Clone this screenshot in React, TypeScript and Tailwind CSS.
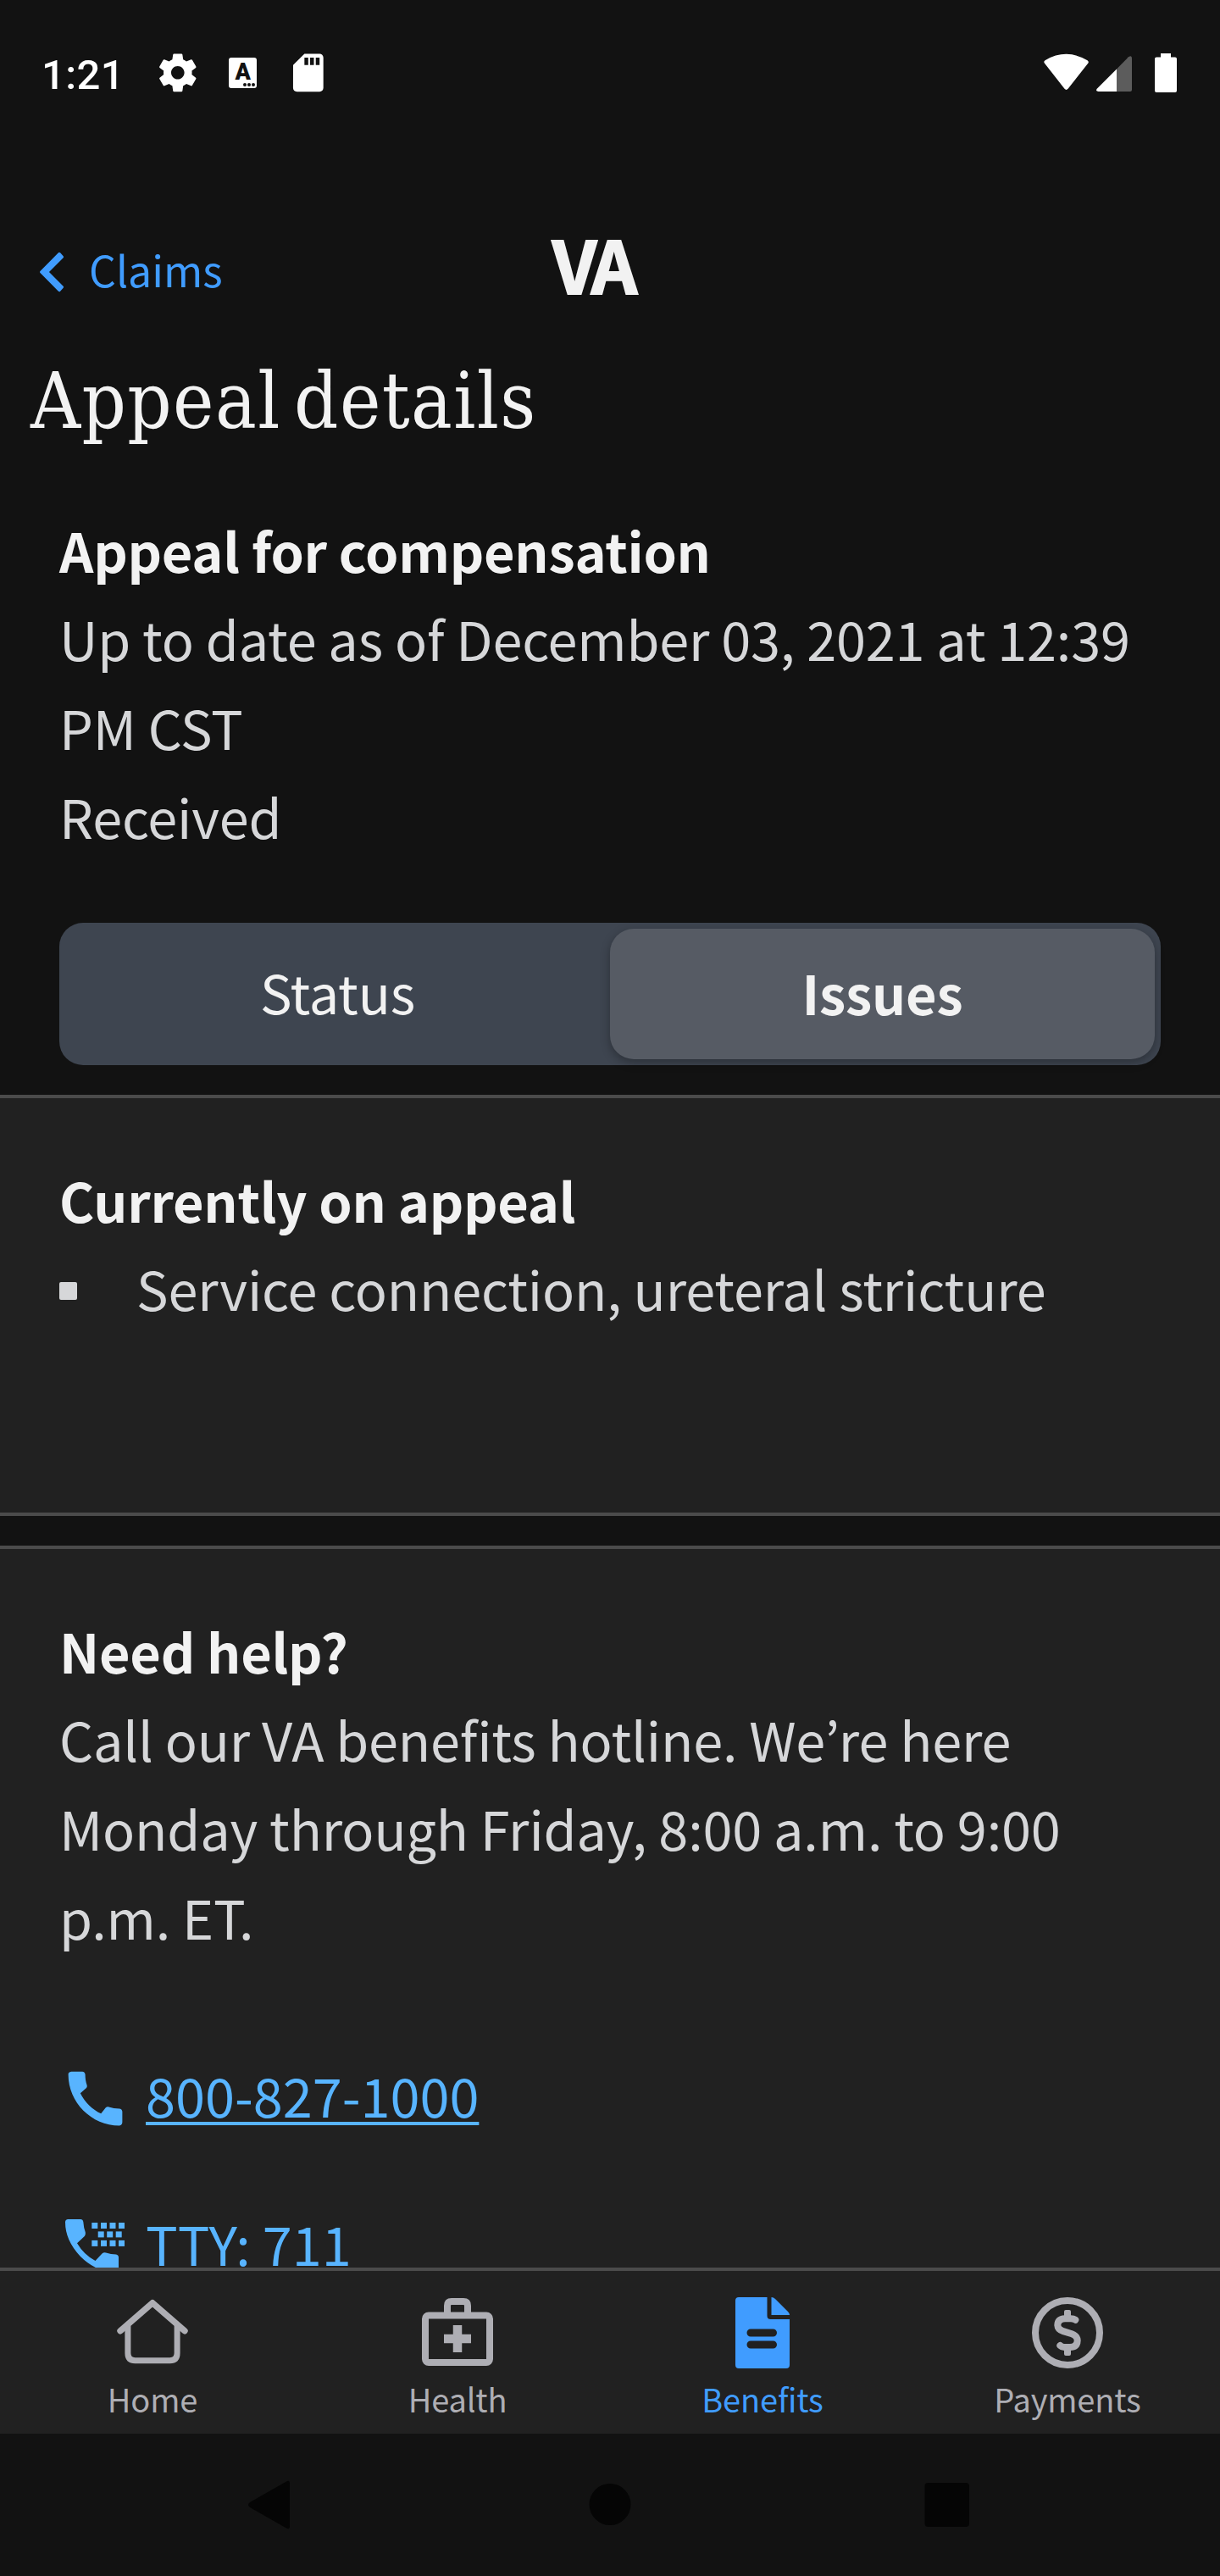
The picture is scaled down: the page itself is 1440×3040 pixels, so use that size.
import React from "react";

const sans = "font-['Noto_Sans_CJK_KR','Noto_Sans',sans-serif]";

const GEAR =
  "M19.43 12.98c.04-.32.07-.64.07-.98s-.03-.66-.07-.98l2.11-1.65c.19-.15.24-.42.12-.64l-2-3.46c-.12-.22-.39-.3-.61-.22l-2.49 1c-.52-.4-1.08-.73-1.69-.98l-.38-2.65C14.46 2.18 14.25 2 14 2h-4c-.25 0-.46.18-.49.42l-.38 2.65c-.61.25-1.17.59-1.69.98l-2.49-1c-.23-.09-.49 0-.61.22l-2 3.46c-.13.22-.07.49.12.64l2.11 1.65c-.04.32-.07.65-.07.98s.03.66.07.98l-2.11 1.65c-.19.15-.24.42-.12.64l2 3.46c.12.22.39.3.61.22l2.49-1c.52.4 1.08.73 1.69.98l.38 2.65c.03.24.24.42.49.42h4c.25 0 .46-.18.49-.42l.38-2.65c.61-.25 1.17-.59 1.69-.98l2.49 1c.23.09.49 0 .61-.22l2-3.46c.12-.22.07-.49-.12-.64l-2.11-1.65zM12 15.5c-1.93 0-3.5-1.57-3.5-3.5s1.57-3.5 3.5-3.5 3.5 1.57 3.5 3.5-1.57 3.5-3.5 3.5z";
const SD_CARD =
  "M18 2h-8L4.02 8 4 20c0 1.1.9 2 2 2h12c1.1 0 2-.9 2-2V4c0-1.1-.9-2-2-2zm-6 6h-2V4h2v4zm3 0h-2V4h2v4zm3 0h-2V4h2v4z";

function StatusBar() {
  return (
    <div className="flex h-[172px] items-center justify-between pl-[49px] pr-[51px] text-white">
      <div className="flex items-center">
        <span className="mt-[5px] w-[134px] font-['Roboto',sans-serif] text-[49px] font-medium leading-[56px] tracking-[0.4px]">1:21</span>
        <svg className="size-[53.6px] shrink-0" viewBox="0 0 24 24" fill="currentColor"><path d={GEAR} /></svg>
        <div className="relative ml-[33.5px] h-[36.5px] w-[33px] rounded-[3px] bg-white">
          <span className="block text-center font-['Roboto',sans-serif] text-[27px] font-black leading-[35px] text-[#121212]">A</span>
          <div className="absolute bottom-[2.4px] right-[2.5px] flex gap-[1.6px]">
            <i className="size-[3.4px] rounded-full bg-[#121212]" />
            <i className="size-[3.4px] rounded-full bg-[#121212]" />
            <i className="size-[3.4px] rounded-full bg-[#121212]" />
          </div>
        </div>
        <svg className="ml-[33.5px] size-[53.6px] shrink-0" viewBox="0 0 24 24" fill="currentColor"><path d={SD_CARD} /></svg>
      </div>
      <svg className="h-[50px] w-[158px]" viewBox="1231 61 158 50">
        <path d="M1233.2 75Q1231.2 72.8 1233.5 71.2Q1258.5 56.5 1283.5 71.2Q1285.8 72.8 1284 75L1260.6 104.8Q1258.5 107 1256.5 104.8Z" fill="#fff" />
        <path d="M1295 104.5L1318 81.5V108H1296.5Q1292.5 107.5 1295 104.5Z" fill="#fff" />
        <path d="M1318 81.5L1332 67.3Q1336 64.5 1336 69V106Q1336 108 1334 108H1318Z" fill="#5c5c5c" />
        <path d="M1370 63H1382V67.5H1387Q1389 67.5 1389 69.5V107Q1389 109 1387 109H1365Q1363 109 1363 107V69.5Q1363 67.5 1365 67.5H1370Z" fill="#fff" />
      </svg>
    </div>
  );
}

function PhoneIcon() {
  return (
    <svg className="size-[85px]" viewBox="0 0 24 24" fill="currentColor">
      <path d="M20.01 15.38c-1.23 0-2.42-.2-3.53-.56-.35-.12-.74-.03-1.01.24l-1.57 1.97c-2.83-1.35-5.48-3.9-6.89-6.83l1.95-1.66c.27-.28.35-.67.24-1.02-.37-1.11-.56-2.3-.56-3.53 0-.54-.45-.99-.99-.99H4.19C3.65 3 3 3.24 3 3.99 3 13.28 10.73 21 20.01 21c.71 0 .99-.63.99-1.18v-3.45c0-.54-.45-.99-.99-.99z" />
    </svg>
  );
}

function TtyIcon() {
  const keys = [
    [31.3, 4], [42, 4], [52.5, 4], [63, 4],
    [38.7, 14.4], [49.2, 14.4], [59.7, 14.4],
    [31.3, 24.9], [42, 24.9], [52.5, 24.9], [63, 24.9],
  ];
  return (
    <svg className="size-[70px]" viewBox="0 0 70 70" fill="currentColor">
      <path d="M3.5 0H18Q20.8 0 21.3 3Q21.8 10 23.7 15Q24.3 18 22.8 20L14 28.3Q22 42 35.5 49L43.5 40.5Q45.5 38.8 48 39.5Q54 41.5 60 41.5Q63 42 63 45V60Q63 63 60 63Q36 62 18 44Q0 25 0 3.5Q0 0 3.5 0Z" />
      {keys.map(([x, y]) => <rect key={`${x}-${y}`} x={x} y={y} width="7" height="7" />)}
    </svg>
  );
}

function HomeIcon() {
  return (
    <svg className="size-[100px]" viewBox="0 0 100 100" fill="none" stroke="currentColor">
      <path d="M12 53.8L50 20.7L88 53.8" strokeWidth="7.4" strokeLinecap="round" strokeLinejoin="round" />
      <path d="M20.9 48V80Q20.9 88.7 29.5 88.7H70.5Q79.1 88.7 79.1 80V48" strokeWidth="7" />
    </svg>
  );
}

function HealthIcon() {
  return (
    <svg className="size-[100px]" viewBox="0 0 100 100" fill="none" stroke="currentColor" strokeWidth="8">
      <rect x="12" y="35.5" width="76" height="55.5" rx="4" />
      <path d="M38 33V24Q38 19 43 19H57Q62 19 62 24V33" />
      <path d="M50 47V79M34 63H66" strokeWidth="10.5" />
    </svg>
  );
}

function BenefitsIcon() {
  return (
    <svg className="size-[100px]" viewBox="0 0 100 100" fill="currentColor">
      <path fillRule="evenodd" d="M22 14H55.5V36Q55.5 40 59.5 40H82V94Q82 98 78 98H22Q18 98 18 94V18Q18 14 22 14ZM36 51.5A4.5 4.5 0 0 0 36 60.5H62.5A4.5 4.5 0 0 0 62.5 51.5ZM36 65.5A4.5 4.5 0 0 0 36 74.5H62.5A4.5 4.5 0 0 0 62.5 65.5Z" />
      <path d="M60.5 14Q63 14 65 16L80 31Q82 33 82 35H60.5Z" />
    </svg>
  );
}

function PaymentsIcon() {
  return (
    <svg className="size-[100px]" viewBox="0 0 100 100" fill="none" stroke="currentColor" strokeWidth="8">
      <circle cx="50" cy="56" r="38" />
      <rect x="46" y="29" width="8" height="10" rx="2" fill="currentColor" stroke="none" />
      <rect x="46" y="73" width="8" height="10" rx="2" fill="currentColor" stroke="none" />
      <path d="M59.3 40.7Q57 39.2 54 39.2H47Q38.3 39.7 38.3 47Q38.5 52 45 54.2L55 57.2Q61.7 59.7 61.7 65Q61.5 73 53 73H46Q43.5 73 41.3 71" strokeLinecap="round" />
    </svg>
  );
}

const tabs = [
  { label: "Home", Icon: HomeIcon },
  { label: "Health", Icon: HealthIcon },
  { label: "Benefits", Icon: BenefitsIcon, active: true },
  { label: "Payments", Icon: PaymentsIcon },
];

function Heading({ children }: { children: React.ReactNode }) {
  return <h2 className="mb-[-1px] pt-px font-bold leading-[104px] tracking-[-0.24px] text-[#f2f2f2]">{children}</h2>;
}

export default function App() {
  return (
    <div className={`flex h-[3040px] w-[1440px] flex-col overflow-hidden bg-[#121212] text-[63px] leading-[105px] tracking-[-0.16px] text-[#d6d7d9] ${sans}`}>
      <StatusBar />
      <header className="grid h-[210px] shrink-0 grid-cols-3 items-start pt-[93px]">
        <a className="mt-[17px] flex items-center pl-[46px] text-[50px] leading-[70px] tracking-normal text-[#409cff]">
          <svg className="mt-[8px] h-[48px] w-[30px]" viewBox="0 0 30 48" fill="currentColor" stroke="currentColor" strokeWidth="3" strokeLinejoin="round">
            <path d="M2.5 24L24 2.3L27.6 6.2L9.9 24L27.6 41.8L24 45.7Z" />
          </svg>
          <span className="ml-[29px]">Claims</span>
        </a>
        <div className="mr-[41px] text-center text-[85px] font-bold leading-[90px] tracking-[-5px] text-[#f2f2f2] [-webkit-text-stroke:2px_#f2f2f2]">VA</div>
      </header>
      <main className="flex h-[2294px] flex-col overflow-hidden">
        <h1 className="h-[214px] shrink-0 pl-[36px] pt-[32px] font-['DejaVu_Serif_Condensed','DejaVu_Serif',serif] text-[91px] leading-[120px] tracking-[1.4px] text-[#f2f2f2] [word-spacing:-12px]">Appeal details</h1>
        <section className="h-[493px] shrink-0 px-[70px]">
          <Heading>Appeal for compensation</Heading>
          <p>Up to date as of December 03, 2021 at 12:39<br />PM CST</p>
          <p>Received</p>
        </section>
        <div className="mx-[70px] mb-[35px] grid h-[168px] shrink-0 grid-cols-2 rounded-[28px] bg-[#3e4550] p-[7px] text-center leading-[148px] text-[#f2f2f2]">
          <div>Status</div>
          <div className="rounded-[28px] bg-[#565b64] font-bold leading-[150px] shadow-[0_4px_12px_rgba(0,0,0,0.3)]">Issues</div>
        </div>
        <section className="h-[497px] shrink-0 border-y-[4px] border-[#4b4b4b] bg-[#212121] px-[70px] pt-[67px]">
          <Heading>Currently on appeal</Heading>
          <div className="flex items-center">
            <span className="mr-[70px] mt-[8px] size-[21px] rounded-[2px] bg-[#d6d7d9]" />
            <span>Service connection, ureteral stricture</span>
          </div>
        </section>
        <section className="mt-[35px] h-[900px] shrink-0 border-t-[4px] border-[#4b4b4b] bg-[#212121] px-[70px] pt-[67px]">
          <Heading>Need help?</Heading>
          <p>Call our VA benefits hotline. We’re here<br />Monday through Friday, 8:00 a.m. to 9:00<br />p.m. ET.</p>
          <a className="mt-[105px] flex h-[105px] items-center tracking-normal text-[#58b4ff]">
            <span className="flex w-[102px] pt-[9px]"><PhoneIcon /></span>
            <span className="underline decoration-[4px] underline-offset-[5px]">800-827-1000</span>
          </a>
          <a className="mt-[70px] flex h-[105px] items-center tracking-normal text-[#58b4ff]">
            <span className="flex w-[102px] pl-[7px] pt-[15px]"><TtyIcon /></span>
            <span>TTY: 711</span>
          </a>
        </section>
      </main>
      <nav className="grid h-[196px] shrink-0 grid-cols-4 border-t-[4px] border-[#4b4b4b] bg-[#212121] pt-[17px]">
        {tabs.map(({ label, Icon, active }) => (
          <a key={label} className={`flex flex-col items-center text-[38px] leading-[60px] ${active ? "text-[#409cff]" : "text-[#aeaeb4]"}`}>
            <Icon />
            <span className="mt-[4px]">{label}</span>
          </a>
        ))}
      </nav>
      <div className="grid flex-1 shrink-0 place-items-center">
        <svg className="h-[168px] w-[1440px]" viewBox="0 2872 1440 168" fill="#050505">
          <path d="M338 2928.5Q342 2926 342 2931V2981Q342 2986 338 2983.5L295 2959Q291 2956 295 2953Z" />
          <circle cx="720" cy="2955.5" r="24.5" />
          <rect x="1091.5" y="2930" width="52.5" height="52" rx="4" />
        </svg>
      </div>
    </div>
  );
}
